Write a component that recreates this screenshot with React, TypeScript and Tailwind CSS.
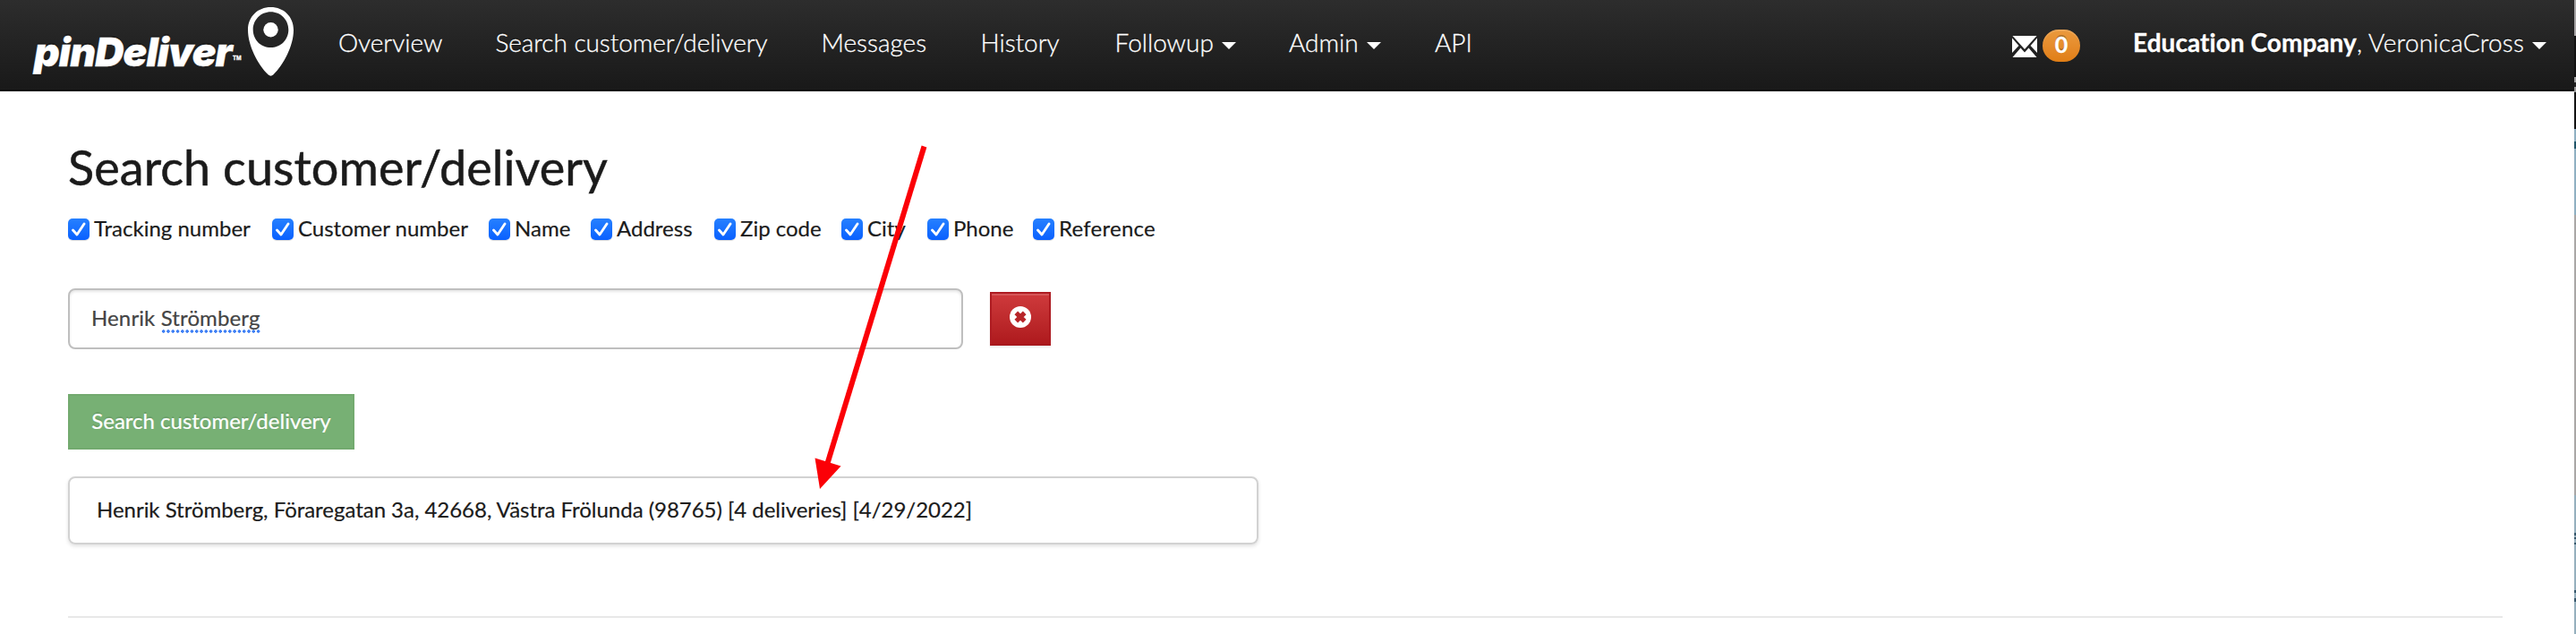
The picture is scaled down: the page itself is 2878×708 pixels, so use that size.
import type { ReactNode } from 'react';

function Caret({ className = '' }: { className?: string }) {
  return (
    <svg viewBox="0 0 16 8" className={`h-2 w-4 fill-white ${className}`}>
      <path d="M0 0h16L8 8z" />
    </svg>
  );
}

function Logo() {
  return (
    <a href="#" className="flex h-[100px] w-[347px] shrink-0 pl-[38px]">
      <span className="mt-[30px] w-[222px] whitespace-nowrap font-['Inter'] text-[44.500px] leading-[56px] font-black tracking-[-0.850px] text-white italic">
        pinDeliver
      </span>
      <span className="mt-[60px] w-[17px] font-['Inter'] text-[6px] leading-[9px] font-bold text-white">TM</span>
      <svg viewBox="0 0 51 77" className="mt-2 h-[77px] w-[51px]">
        <path
          fill="#fff"
          fillRule="evenodd"
          d="M25.5 0C11 0 0 10.5 0 25.500C0 43 11 64 22.500 75.300Q25.500 78 28.500 75.300C40 64 51 43 51 25.500C51 10.500 40 0 25.500 0ZM25.500 5.300C36.500 5.300 45.300 14 45.300 25.200C45.300 36.500 36.500 45 25.500 45C14.500 45 5.700 36.500 5.700 25.200C5.700 14 14.500 5.300 25.500 5.300Z"
        />
        <circle cx="25.500" cy="25.200" r="8.200" fill="#fff" />
      </svg>
    </a>
  );
}

function NavItem({ children, caret, className }: { children: ReactNode; caret?: boolean; className: string }) {
  return (
    <a href="#" className={`flex shrink-0 items-center whitespace-nowrap ${className}`}>
      {children}
      {caret && <Caret className="mt-[7px] ml-[9px]" />}
    </a>
  );
}

function Navbar() {
  return (
    <header className="flex h-[102px] border-b-2 border-[#060606] bg-linear-to-b from-[#2d2d2d] to-[#191919] text-[28px] font-light text-white [-webkit-text-stroke:0.3px_white] [text-shadow:0_-2px_0_rgba(0,0,0,0.25)]">
      <Logo />
      <nav className="flex h-[94px] grow pl-[31px]">
        <NavItem className="w-[175.500px]">Overview</NavItem>
        <NavItem className="w-[364px] tracking-[-0.060px]">Search customer/delivery</NavItem>
        <NavItem className="w-[178px]">Messages</NavItem>
        <NavItem className="w-[150px]">History</NavItem>
        <NavItem caret className="w-[194.500px]">Followup</NavItem>
        <NavItem caret className="w-[163px]">Admin</NavItem>
        <NavItem className="w-[60px]">API</NavItem>
      </nav>
      <a href="#" className="mt-[33px] flex h-9 w-[135px] shrink-0 gap-[6px]">
        <svg viewBox="0 0 28 24" className="mt-[7px] h-6 w-7 fill-white">
          <path d="M0.500 0H27.500L14 15ZM0 2.500V19L7.500 11ZM28 2.500V19L20.500 11ZM0.500 24L9.500 13.500L14 18.500L18.500 13.500L27.500 24Z" />
        </svg>
        <span className="flex h-9 w-[42px] items-center justify-center rounded-[18px] bg-linear-to-b from-[#eb9a3d] to-[#e07e15] pb-[3px] text-[25px] leading-none font-bold shadow-[inset_0_2px_0_rgba(255,255,255,0.12)]">
          0
        </span>
      </a>
      <a href="#" className="flex h-[94px] w-[493px] shrink-0 items-center whitespace-nowrap tracking-[0.050px]">
        <strong className="font-bold">Education Company</strong>
        <span className="tracking-[0.220px] whitespace-pre">, VeronicaCross</span>
        <Caret className="mt-[7px] ml-[9px]" />
      </a>
    </header>
  );
}

const FILTERS = [
  { label: 'Tracking number', width: 'w-[228px]' },
  { label: 'Customer number', width: 'w-[242px]' },
  { label: 'Name', width: 'w-[114px]' },
  { label: 'Address', width: 'w-[138px]' },
  { label: 'Zip code', width: 'w-[142px]' },
  { label: 'City', width: 'w-[96px]' },
  { label: 'Phone', width: 'w-[118px]' },
  { label: 'Reference', width: 'w-[150px] tracking-[0.250px]' },
];

function Filter({ label, width }: { label: string; width: string }) {
  return (
    <label className={`flex shrink-0 gap-[5px] whitespace-nowrap ${width}`}>
      <svg viewBox="0 0 24 24" className="size-6 rounded-[5px] bg-linear-to-b from-[#2680ff] to-[#0a60ff] shadow-[0_1px_1px_rgba(0,0,0,0.15)]">
        <path d="M5.500 13L10 18L18 6" fill="none" stroke="#fff" strokeWidth="2.800" strokeLinecap="round" strokeLinejoin="round" />
      </svg>
      <span className="-mt-px text-2xl leading-6">{label}</span>
    </label>
  );
}

function WindowEdge() {
  return (
    <div className="flex h-[708px] w-[2px] shrink-0 flex-col">
      <div className="h-10 bg-[#a5a3a4]" />
      <div className="h-[46px] bg-[#121212]" />
      <div className="h-[6px] bg-[#a0a0a0]" />
      <div className="h-[5px] bg-[#222]" />
      <div className="h-[6px] bg-[#999]" />
      <div className="h-[41px] bg-[#121212]" />
      <div className="h-[14px] bg-[#8fb0c2]" />
      <div className="h-[8px] bg-[#1f5468]" />
      <div className="h-[74px] bg-[#8fb0c2]" />
      <div className="h-[313px] bg-[#a9a7a6]" />
      <div className="h-[42px] bg-[#95afbd]" />
      <div className="h-[3px] bg-[#36566a]" />
      <div className="h-[2px] bg-[#95afbd]" />
      <div className="h-[2px] bg-[#36566a]" />
      <div className="h-[4px] bg-[#95afbd]" />
      <div className="h-[2px] bg-[#36566a]" />
      <div className="h-[51px] bg-[#95afbd]" />
      <div className="h-[3px] bg-[#36566a]" />
      <div className="h-[6px] bg-[#95afbd]" />
      <div className="h-[4px] bg-[#36566a]" />
      <div className="grow bg-[#95afbd]" />
    </div>
  );
}

export default function App() {
  return (
    <div className="relative flex h-[708px] w-[2878px] overflow-hidden bg-white font-['Lato',sans-serif] text-[#1b1b1b] [font-variant-ligatures:none]">
      <div className="w-[2876px] shrink-0">
        <Navbar />
        <main className="pr-20 pl-[76px] [-webkit-text-stroke:0.2px]">
          <h2 className="pt-[51px] text-[54px] leading-[68px] tracking-[0.050px] [-webkit-text-stroke:0.5px]">Search customer/delivery</h2>
          <div className="mt-[23px] flex h-6">
            {FILTERS.map((f) => (
              <Filter key={f.label} {...f} />
            ))}
          </div>
          <div className="mt-[54px] flex gap-[30px]">
            <div className="h-[68px] w-[1000px] rounded-[8px] border-2 border-[#bfbfbf] pt-[15px] pl-[24px] text-2xl leading-8 tracking-[0.120px] text-[#444] shadow-[inset_0_2px_3px_rgba(0,0,0,0.1)]">
              Henrik{' '}
              <span className="inline-block h-[33px] bg-[radial-gradient(circle,#3f80f5_1.500px,transparent_2px)] bg-[length:5.300px_4px] bg-bottom-left bg-repeat-x align-top">
                Strömberg
              </span>
            </div>
            <button className="mt-1 flex h-[60px] w-[68px] justify-center border-2 border-[#ae1c22] border-b-[#a8181d] bg-linear-to-b from-[#cf3a3c] to-[#ae191d] pt-[14px] shadow-[inset_0_2px_0_rgba(255,255,255,0.15),0_2px_2px_rgba(0,0,0,0.08)]">
              <svg viewBox="0 0 24 24" className="size-6">
                <circle cx="12" cy="12" r="12" fill="#fff" />
                <path d="M7.300 7.300L16.700 16.700M16.700 7.300L7.300 16.700" stroke="#b82529" strokeWidth="5.200" />
              </svg>
            </button>
          </div>
          <button className="mt-[50px] block h-[62px] w-[320px] border-2 border-[#73aa6f] bg-[#77b074] pb-[2px] text-center text-2xl text-white [text-shadow:0_-2px_0_rgba(0,0,0,0.1)]">
            Search customer/delivery
          </button>
          <div className="mt-[30px] h-[76px] w-[1330px] rounded-[8px] border-2 border-[#d2d2d2] pt-[19px] pl-[30px] text-2xl leading-8 tracking-[-0.030px] shadow-[0_2px_4px_rgba(0,0,0,0.12)]">
            Henrik Strömberg, Föraregatan 3a, 42668, Västra Frölunda (98765) [4 deliveries] [4/29/2022]
          </div>
          <hr className="mt-20 border-t-2 border-[#e8e8e8]" />
        </main>
      </div>
      <WindowEdge />
      <svg viewBox="0 0 140 400" className="pointer-events-none absolute top-[155px] left-[900px] h-[400px] w-[140px]">
        <path d="M132.500 8.500L24 364" stroke="#fb0007" strokeWidth="6" />
        <path d="M10.500 356.500L39.500 365.500L16 391Z" fill="#fb0007" />
      </svg>
    </div>
  );
}
